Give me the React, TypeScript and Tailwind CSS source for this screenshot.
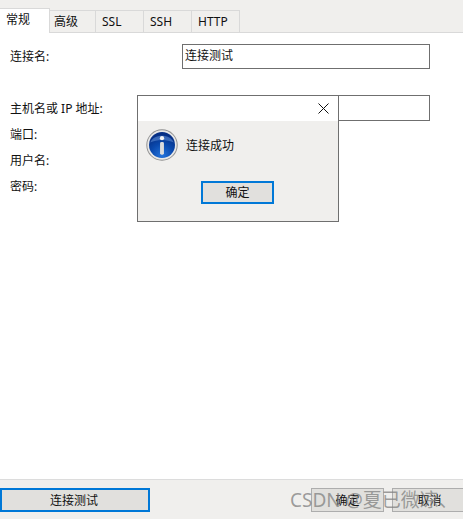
const font = "[font-family:'Noto_Sans','Noto_Sans_CJK_SC',sans-serif]";

function Tab({ label, className }: { label: string; className: string }) {
  return (
    <div className={`h-[23px] mt-[2px] bg-[#f0efed] border-t border-r border-b border-[#d9d9d9] pt-[2px] leading-[18px] ${className}`}>
      {label}
    </div>
  );
}

function InfoIcon() {
  return (
    <svg width="32" height="32" viewBox="0 0 33 33">
      <defs>
        <radialGradient id="blue" cx="50%" cy="90%" r="80%">
          <stop offset="0%" stopColor="#2474dc" />
          <stop offset="55%" stopColor="#0a49ad" />
          <stop offset="100%" stopColor="#062f85" />
        </radialGradient>
      </defs>
      <circle cx="16.5" cy="16.5" r="16.2" fill="#8f8f8f" />
      <circle cx="16.5" cy="16.5" r="15.2" fill="#e8e8e8" />
      <circle cx="16.5" cy="16.5" r="13.4" fill="url(#blue)" />
      <path d="M4.5 14 C7 4.5 26 4.5 28.5 14 C22 10.5 11 10.5 4.5 14 Z" fill="#6d9ce0" opacity="0.5" />
      <circle cx="16.5" cy="9.5" r="2.2" fill="#f4f4f4" />
      <rect x="14.5" y="13.5" width="4" height="13" rx="1.5" fill="#dcdcdc" />
    </svg>
  );
}

function Field({ label, className }: { label: string; className: string }) {
  return <div className={`pl-[10px] leading-[16px] ${className}`}>{label}</div>;
}

export default function App() {
  return (
    <div className={`relative w-[463px] h-[519px] flex flex-col bg-white text-[12px] text-[#111] overflow-hidden ${font}`}>
      <div className="h-[33px] pt-[8px] flex items-start bg-[#f0efed] border-b border-[#d9d9d9] shrink-0">
        <div className="h-[25px] w-[50px] bg-white border-t border-r border-[#d9d9d9] pl-[6px] pt-[3px] leading-[16px]">常规</div>
        <Tab label="高级" className="w-[46px] pl-[4px]" />
        <Tab label="SSL" className="w-[48px] pl-[6px]" />
        <Tab label="SSH" className="w-[48px] pl-[6px]" />
        <Tab label="HTTP" className="w-[48px] pl-[6px]" />
      </div>

      <div className="flex-1 flex flex-col pt-[11px]">
        <div className="flex items-center h-[25px]">
          <Field label="连接名:" className="w-[182px]" />
          <div className="w-[248px] h-[25px] border border-[#6f6f6f] pl-[2px] leading-[22px]">连接测试</div>
        </div>
        <div className="flex items-center h-[26px] mt-[26px]">
          <Field label="主机名或 IP 地址:" className="w-[137px] mt-[2px]" />
          <div className="w-[293px] h-[26px] border border-[#6f6f6f]" />
        </div>
        <Field label="端口:" className="mt-[6px]" />
        <Field label="用户名:" className="mt-[10px]" />
        <Field label="密码:" className="mt-[10px]" />
      </div>

      <div className="h-[40px] shrink-0 bg-[#f0efed] border-t border-[#dcdcdc] pt-[8px] flex">
        <div className="w-[150px] h-[24px] shrink-0 bg-[#e1e0dd] border-2 border-[#0078d7] flex items-center justify-center pr-[2px] pt-[1px]">连接测试</div>
        <div className="w-[73px] h-[24px] shrink-0 ml-[161px] bg-[#e1e0dd] border border-[#adadad] flex items-center justify-center pt-[1px]">确定</div>
        <div className="w-[75px] h-[24px] shrink-0 ml-[8px] bg-[#e1e0dd] border border-[#adadad] flex items-center justify-center pt-[1px]">取消</div>
      </div>

      <div className="absolute left-[137px] top-[95px] w-[202px] h-[127px] border border-[#6f6f6f] bg-[#f0efed] flex flex-col">
        <div className="h-[25px] bg-white flex justify-end items-center pr-[9px] shrink-0">
          <svg width="11" height="11" viewBox="0 0 11 11" fill="none" stroke="#111" strokeWidth="1">
            <path d="M0.5 0.5 L10.5 10.5 M10.5 0.5 L0.5 10.5" />
          </svg>
        </div>
        <div className="flex items-center pl-[8px] mt-[8px]">
          <InfoIcon />
          <span className="ml-[8px] pt-[2px]">连接成功</span>
        </div>
        <div className="w-[73px] h-[23px] ml-[63px] mt-[20px] bg-[#e1e0dd] border-2 border-[#0078d7] flex items-center justify-center pt-[1px]">确定</div>
      </div>

      <div className="absolute left-[290px] top-[487px] text-[19px] leading-[26px] text-[#808080]/75 whitespace-nowrap">CSDN @夏已微凉、</div>
    </div>
  );
}
